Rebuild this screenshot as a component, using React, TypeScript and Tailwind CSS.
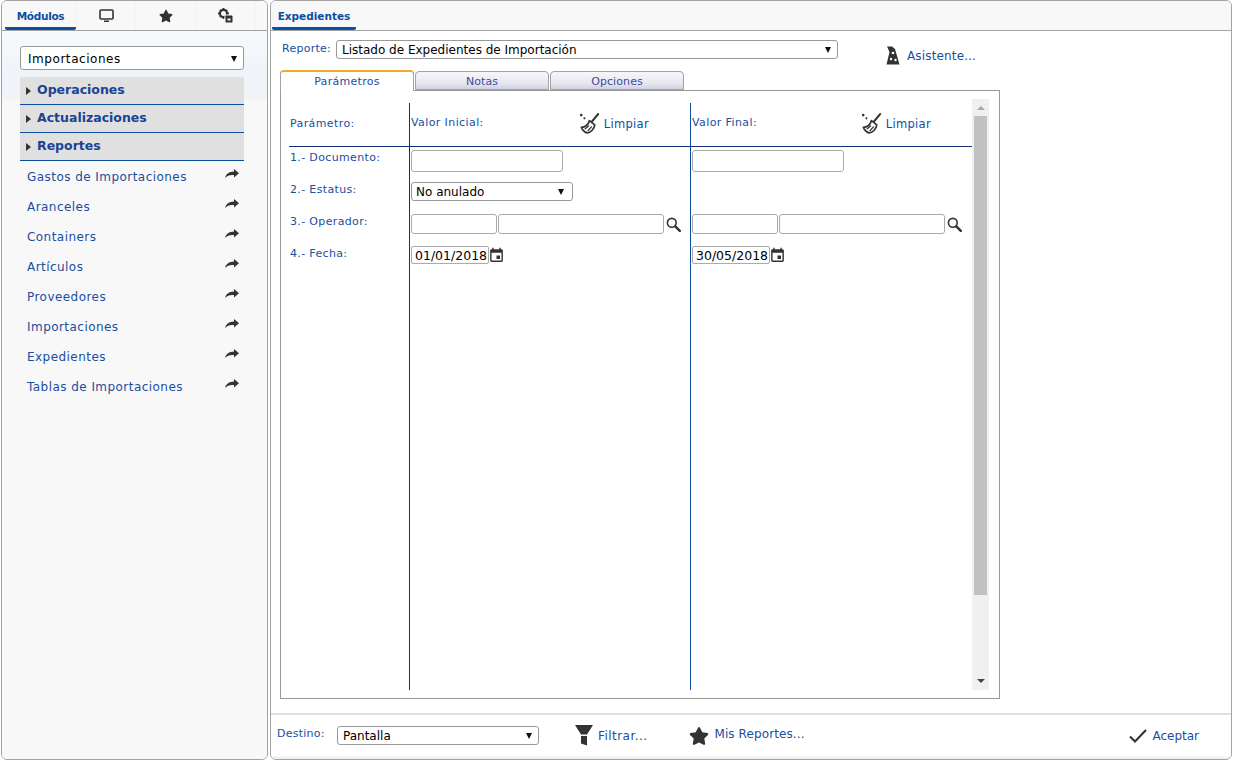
import React from "react";
import { FaStar } from "react-icons/fa";
import { MdEvent } from "react-icons/md";

const font = "font-['DejaVu_Sans',sans-serif]";
const items = ["Gastos de Importaciones", "Aranceles", "Containers", "Artículos", "Proveedores", "Importaciones", "Expedientes", "Tablas de Importaciones"];
const sections = ["Operaciones", "Actualizaciones", "Reportes"];

function Caret() {
  return <span className="w-0 h-0 border-x-[3.5px] border-x-transparent border-t-[6px] border-t-[#111]" />;
}

function Select({ text, className }: { text: string; className: string }) {
  return (
    <div className={`flex items-center justify-between bg-white border border-[#999] rounded-[3px] text-black ${className}`}>
      <span>{text}</span>
      <Caret />
    </div>
  );
}

function Input({ className }: { className: string }) {
  return <div className={`bg-white border border-[#aaa] rounded-[3px] ${className}`} />;
}

function Broom() {
  return (
    <svg width="21" height="21" viewBox="0 0 21 22" fill="none">
      <circle cx="1.8" cy="2.2" r="1.4" fill="#333" />
      <circle cx="5.2" cy="5.6" r="1.1" fill="#333" />
      <path d="M13 9 L19.5 1.2" stroke="#333" strokeWidth="2.2" strokeLinecap="round" />
      <path d="M10.5 8 L16 12.5 C15.5 16.5 12 20.5 8 20.8 C5.5 20 3.2 18 2 15 C5.5 15 9 12.5 10.5 8 Z" fill="#fff" stroke="#333" strokeWidth="1.8" strokeLinejoin="round" />
      <path d="M6 16.5 L9.5 13.5 M9 18.5 L12.5 14.5" stroke="#333" strokeWidth="1.4" strokeLinecap="round" />
    </svg>
  );
}

function Limpiar() {
  return (
    <div className="self-start flex items-center gap-[4px] text-[#0b4ea2] text-[11.5px] tracking-[0.3px]">
      <Broom />
      <span className="mt-[3px]">Limpiar</span>
    </div>
  );
}

function Lens() {
  return (
    <svg width="15" height="15" viewBox="0 0 15 15" fill="none" className="ml-[1px]">
      <circle cx="5.8" cy="5.8" r="4.4" stroke="#333" strokeWidth="1.6" />
      <path d="M9.3 9.3 L13.8 13.8" stroke="#333" strokeWidth="2.4" strokeLinecap="round" />
    </svg>
  );
}

function Arrow() {
  return (
    <svg width="14" height="9" viewBox="0 0 14 9" className="-mt-[7px]">
      <path d="M9 0 L14 4.2 L9 8.5 V6 C5 5.5 2.5 6.5 0 9 C1 5 4 2.7 9 2.5 Z" fill="#333" />
    </svg>
  );
}

function DateField({ value }: { value: string }) {
  return (
    <div className="flex items-center">
      <div className="h-[18px] w-[78px] bg-white border border-[#aaa] rounded-[2px] text-black text-[12.5px] leading-[18px] pl-[3px]">{value}</div>
      <MdEvent className="w-[17px] h-[17px] text-[#333] -ml-[1px]" />
    </div>
  );
}

function Monitor() {
  return (
    <svg width="15" height="14" viewBox="0 0 15 14" fill="none">
      <rect x="1" y="1" width="13" height="9" rx="1" stroke="#333" strokeWidth="1.6" />
      <path d="M5 13h5v-1.5H5z" fill="#333" />
    </svg>
  );
}

function Gears() {
  return (
    <svg width="15" height="15" viewBox="0 0 15 15">
      <circle cx="5.5" cy="5.5" r="3.6" fill="none" stroke="#333" strokeWidth="2.2" />
      <path d="M4.6 0h1.8v2H4.6zM4.6 9h1.8v2H4.6zM0 4.6h2v1.8H0zM9 4.6h2v1.8H9zM1.3 2.5l1.2-1.2 1.3 1.3-1.2 1.2zM7.3 8.4l1.2-1.2 1.3 1.3-1.2 1.2zM1.3 8.5l1.3-1.3 1.2 1.2-1.3 1.3zM7.2 2.6l1.3-1.3 1.2 1.2-1.3 1.3z" fill="#333" />
      <rect x="7" y="7" width="8" height="8" rx="1.5" fill="#333" stroke="#f8f8f8" />
      <rect x="9.5" y="10.5" width="3" height="2" fill="#f8f8f8" />
    </svg>
  );
}

function Hat() {
  return (
    <svg width="14" height="19" viewBox="0 0 14 19">
      <path d="M1 0.5 L6 0.5 L9 3 L13.5 18.5 L0.5 18.5 L3.5 6 Z" fill="#333" />
      <circle cx="7" cy="7" r="1.3" fill="#fff" />
      <circle cx="5" cy="13" r="1.2" fill="#fff" />
      <circle cx="9.5" cy="14" r="1.2" fill="#fff" />
    </svg>
  );
}

function Funnel() {
  return (
    <svg width="18" height="21" viewBox="0 0 18 21">
      <path d="M0 0H18L12 9.5H6Z M6 11H12V20.5L6 18.5Z" fill="#333" />
    </svg>
  );
}

function CheckMark() {
  return (
    <svg width="18" height="14" viewBox="0 0 18 14" fill="none">
      <path d="M1 7.5 L6 12.5 L17 1" stroke="#333" strokeWidth="2.1" />
    </svg>
  );
}

function Param({ label, h }: { label: string; h: string }) {
  return <div className={`${h} text-[11px] tracking-[0.35px] text-[#1a4e9e] pt-[3px]`}>{label}</div>;
}

export default function App() {
  return (
    <div className={`${font} w-[1233px] h-[762px] bg-white flex gap-[2px] pl-[1px] overflow-hidden text-[12px]`}>
      {/* left */}
      <aside className="w-[267px] h-[760px] border border-[#a3a3a3] rounded-[6px] bg-[#f8f8f8] flex flex-col overflow-hidden">
        <div className="h-[30px] shrink-0 border-b border-[#a3a3a3] flex items-end pl-[3px] bg-[#f8f8f8]">
          <div className="w-[71px] h-[29px] border-b-[3px] border-[#0b4ea2] rounded-b-[2px] text-center text-[#0b4ea2] font-bold text-[10.5px] leading-[30px] tracking-[-0.3px]">Módulos</div>
          <div className="w-[60px] h-[29px] flex items-center justify-center border-x border-[#f3f3f3]"><Monitor /></div>
          <div className="w-[60px] h-[29px] flex items-center justify-center border-r border-[#f3f3f3]"><FaStar className="w-[14px] h-[14px] text-[#333]" /></div>
          <div className="w-[60px] h-[29px] flex items-center justify-center border-r border-[#f3f3f3]"><Gears /></div>
        </div>
        <div className="flex-1 bg-[linear-gradient(to_bottom,#f7f9fc_0px,#f0f4f9_40px,#f0f4f9_69px,#f8f8f8_70px)] pl-[18px] pr-[23px] pt-[15px]">
          <Select text="Importaciones" className="h-[24px] pl-[7px] pr-[6px] pt-[1px] text-[12px] tracking-[0.55px]" />
          <div className="mt-[7px] rounded-t-[2px] overflow-hidden">
            {sections.map((s) => (
              <div key={s} className="h-[28px] bg-[#e0e0e0] border-b border-[#0b4ea2] flex items-center pl-[6px] gap-[6px] text-[#1a4391] font-bold text-[12.5px]">
                <span className="w-0 h-0 border-y-[4px] border-y-transparent border-l-[5px] border-l-[#333]" />
                {s}
              </div>
            ))}
          </div>
          <div>
            {items.map((t) => (
              <div key={t} className="h-[30px] flex items-center justify-between pl-[7px] pr-[5px] pt-[2px] text-[#1a4e9e] text-[12px] tracking-[0.45px]">
                <span>{t}</span>
                <Arrow />
              </div>
            ))}
          </div>
        </div>
      </aside>

      {/* right */}
      <main className="w-[962px] h-[760px] border border-[#a3a3a3] rounded-[6px] bg-white flex flex-col overflow-hidden">
        <div className="h-[30px] shrink-0 bg-[#f8f8f8] border-b border-[#a3a3a3] flex items-end pl-[1px]">
          <div className="w-[84px] h-[29px] border-b-[3px] border-[#0b4ea2] rounded-b-[2px] text-center text-[#0b4ea2] font-bold text-[10.5px] leading-[30px]">Expedientes</div>
        </div>

        <div className="flex-1 pl-[9px] flex flex-col">
          <div className="h-[40px] shrink-0 flex items-start pt-[9px] relative">
            <span className="text-[11px] text-[#1a4e9e] ml-[2px] mt-[1px] w-[54px] tracking-[0.25px]">Reporte:</span>
            <Select text="Listado de Expedientes de Importación" className="w-[502px] h-[19px] pl-[5px] pr-[6px] text-[12px]" />
            <div className="ml-[48px] mt-[6px] flex items-center gap-[7px] text-[#1a4e9e] text-[12px] tracking-[0.15px]">
              <Hat />
              <span>Asistente...</span>
            </div>
          </div>

          <div className="flex h-[19px] shrink-0 items-end gap-[1px] relative z-10">
            <div className="w-[134px] h-[21px] -mb-[1px] bg-white border border-[#a3a3a3] border-b-0 border-t-[2px] border-t-[#f5ab24] rounded-t-[4px] text-center text-[11px] tracking-[0.3px] leading-[19px] text-[#1a4e9e]">Parámetros</div>
            <div className="w-[134px] h-[19px] bg-[linear-gradient(to_bottom,#f6f6fa,#e6e6f0_70%,#cfcfdf)] border border-[#a3a3a3] rounded-t-[4px] text-center text-[11px] tracking-[0.1px] leading-[19px] text-[#3b4a9e]">Notas</div>
            <div className="w-[134px] h-[19px] bg-[linear-gradient(to_bottom,#f6f6fa,#e6e6f0_70%,#cfcfdf)] border border-[#a3a3a3] rounded-t-[4px] text-center text-[11px] tracking-[0.1px] leading-[19px] text-[#3b4a9e]">Opciones</div>
          </div>

          <div className="w-[720px] h-[609px] shrink-0 border border-[#999] flex pl-[8px] pt-[7px]">
            <div className="w-[683px] h-[587px] mt-[5px] flex flex-col">
              <div className="h-[44px] shrink-0 flex border-b border-[#0f2f78]">
                <div className="w-[120px] text-[11px] text-[#1a4e9e] pl-[1px] pt-[13px] tracking-[0.4px]">Parámetro:</div>
                <div className="w-[281px] border-l border-[#0f2f78] pl-[1px] flex justify-between pr-[41px] pt-[10px] text-[11px] text-[#1a4e9e] tracking-[0.4px]">
                  <span className="mt-[2px]">Valor Inicial:</span>
                  <Limpiar />
                </div>
                <div className="flex-1 border-l border-[#0b4ea2] pl-[1px] flex justify-between pr-[41px] pt-[10px] text-[11px] text-[#1a4e9e] tracking-[0.4px]">
                  <span className="mt-[2px]">Valor Final:</span>
                  <Limpiar />
                </div>
              </div>
              <div className="flex-1 flex">
                <div className="w-[120px] pl-[1px]">
                  <Param label="1.- Documento:" h="h-[32px]" />
                  <Param label="2.- Estatus:" h="h-[32px]" />
                  <Param label="3.- Operador:" h="h-[32px]" />
                  <Param label="4.- Fecha:" h="h-[32px]" />
                </div>
                <div className="w-[281px] border-l border-[#0f2f78] pl-[1px] pt-[3px]">
                  <Input className="w-[152px] h-[22px]" />
                  <Select text="No anulado" className="w-[162px] h-[19px] mt-[10px] pl-[4px] pr-[8px] text-[12px]" />
                  <div className="flex items-center mt-[13px] gap-[1px]">
                    <Input className="w-[86px] h-[20px]" />
                    <Input className="w-[166px] h-[20px]" />
                    <Lens />
                  </div>
                  <div className="mt-[12px]"><DateField value="01/01/2018" /></div>
                </div>
                <div className="flex-1 border-l border-[#0b4ea2] pl-[1px] pt-[3px]">
                  <Input className="w-[152px] h-[22px]" />
                  <div className="h-[19px] mt-[10px]" />
                  <div className="flex items-center mt-[13px] gap-[1px]">
                    <Input className="w-[86px] h-[20px]" />
                    <Input className="w-[166px] h-[20px]" />
                    <Lens />
                  </div>
                  <div className="mt-[12px]"><DateField value="30/05/2018" /></div>
                </div>
              </div>
            </div>
            {/* scrollbar */}
            <div className="w-[17px] h-[591px] mt-[1px] bg-[#f0f0f0] flex flex-col items-center">
              <div className="h-[17px] flex items-center justify-center"><span className="w-0 h-0 border-x-[4px] border-x-transparent border-b-[4px] border-b-[#aaa]" /></div>
              <div className="w-[13px] h-[479px] bg-[#c1c1c1]" />
              <div className="flex-1" />
              <div className="h-[18px] flex items-center justify-center"><span className="w-0 h-0 border-x-[4px] border-x-transparent border-t-[4px] border-t-[#444]" /></div>
            </div>
          </div>
        </div>

        <div className="h-[46px] shrink-0 border-t-2 border-[#e0e0e0] bg-[linear-gradient(to_bottom,#ffffff_41px,#eef2f7_42px)] flex items-center pl-[6px] pr-[32px] pb-[3px]">
          <span className="text-[11px] text-[#1a4e9e] w-[60px] tracking-[0.25px] -mt-[2px]">Destino:</span>
          <Select text="Pantalla" className="w-[202px] h-[19px] pl-[5px] pr-[6px] text-[12px]" />
          <div className="ml-[36px] flex items-center gap-[5px] text-[#1a4e9e] text-[12px] tracking-[0.45px]"><Funnel /><span>Filtrar...</span></div>
          <div className="ml-[42px] flex items-center gap-[5px] text-[#1a4e9e] text-[12px] tracking-[0.1px]"><FaStar className="w-[20px] h-[20px] text-[#333]" /><span className="-mt-[3px]">Mis Reportes...</span></div>
          <div className="ml-auto flex items-center gap-[5px] text-[#1a4e9e] text-[12px]"><CheckMark /><span>Aceptar</span></div>
        </div>
      </main>
    </div>
  );
}
